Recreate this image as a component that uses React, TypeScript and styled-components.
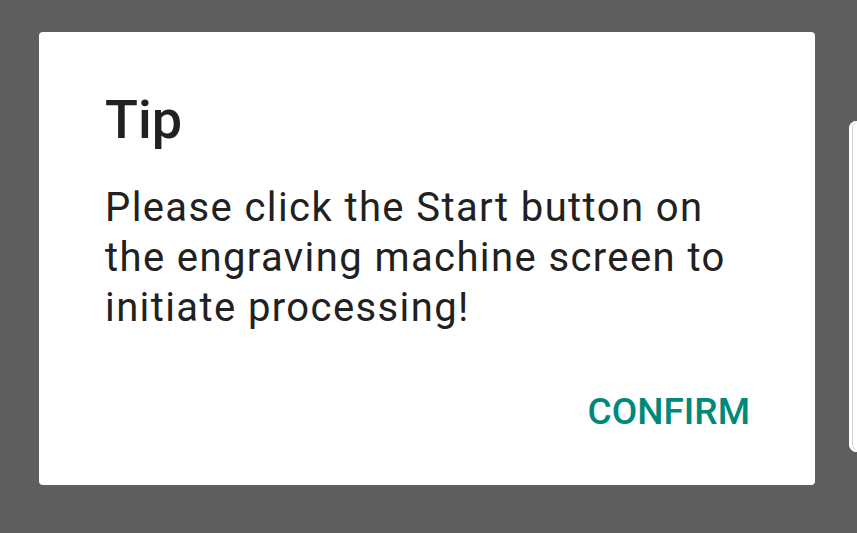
import React from "react";
import styled, { createGlobalStyle } from "styled-components";

const GlobalStyle = createGlobalStyle`
  html, body {
    margin: 0;
    padding: 0;
    background: #5f5f5f;
  }
  * {
    box-sizing: border-box;
  }
`;

const Page = styled.div`
  width: 857px;
  height: 533px;
  display: flex;
  align-items: flex-start;
  overflow: hidden;
  background: #5f5f5f;
  font-family: Roboto, "Liberation Sans", sans-serif;
`;

const Dialog = styled.div`
  flex-shrink: 0;
  width: 776px;
  height: 453px;
  margin: 32px 0 0 39px;
  padding: 56px 65px 0 66px;
  background: #ffffff;
  border-radius: 4px;
  display: flex;
  flex-direction: column;
`;

const Title = styled.h2`
  margin: 0;
  font-size: 54px;
  line-height: 64px;
  font-weight: 500;
  color: #212121;
`;

const Message = styled.p`
  margin: 31px 0 0;
  font-size: 40px;
  line-height: 50px;
  letter-spacing: 1.4px;
  font-weight: 400;
  color: #212121;
`;

const Actions = styled.div`
  margin-top: 57px;
  display: flex;
  justify-content: flex-end;
`;

const TextButton = styled.button`
  border: none;
  background: none;
  padding: 0;
  font-family: inherit;
  font-size: 37px;
  line-height: 44px;
  font-weight: 500;
  color: #00897b;
  cursor: pointer;
`;

const SideCard = styled.div`
  flex-shrink: 0;
  width: 60px;
  height: 331px;
  margin: 121px 0 0 34px;
  background: #ffffff;
  border-radius: 8px;
  box-shadow: inset 3px 0 0 #ffffff, inset 4px 0 0 #d6d6d6;
`;

export default function App() {
  return (
    <>
      <GlobalStyle />
      <Page>
        <Dialog>
          <Title>Tip</Title>
          <Message>
            Please click the Start button on the engraving machine screen to
            initiate processing!
          </Message>
          <Actions>
            <TextButton>CONFIRM</TextButton>
          </Actions>
        </Dialog>
        <SideCard />
      </Page>
    </>
  );
}
